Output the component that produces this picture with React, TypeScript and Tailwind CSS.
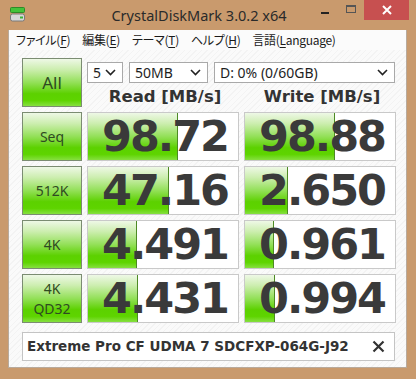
import React from "react";

type Result = {
  label: string[];
  read: string;
  write: string;
  readBar: number;
  writeBar: number;
};

const results: Result[] = [
  { label: ["Seq"], read: "98.72", write: "98.88", readBar: 90, writeBar: 90 },
  { label: ["512K"], read: "47.16", write: "2.650", readBar: 81, writeBar: 43 },
  { label: ["4K"], read: "4.491", write: "0.961", readBar: 49, writeBar: 29 },
  { label: ["4K", "QD32"], read: "4.431", write: "0.994", readBar: 50, writeBar: 30 },
];

const greenFill =
  "bg-[linear-gradient(to_bottom,#eef8e6_0%,#cdeeb0_22%,#93e058_50%,#5cd100_74%,#5ed400_88%,#86e040_100%)]";

const Chevron = () => (
  <svg width="11" height="7" viewBox="0 0 11 7" className="shrink-0">
    <path d="M1 1 L5.5 5.5 L10 1" fill="none" stroke="#222" strokeWidth="1.6" />
  </svg>
);

const Select = ({ text, width }: { text: string; width: string }) => (
  <div
    className={`${width} h-[21px] flex items-center justify-between bg-white border border-[#a9a9a9] pl-[5px] pr-[6px] text-[14px] text-[#1e1e1e] leading-none`}
  >
    <span>{text}</span>
    <Chevron />
  </div>
);

const GreenButton = ({ lines, big }: { lines: string[]; big?: boolean }) => (
  <div
    className={`w-[60px] h-full shrink-0 flex flex-col items-center justify-center border border-[#7b8c72] ${greenFill} ${
      big ? "text-[17px]" : "text-[14px] leading-[20px]"
    } text-[#2f4a22]`}
  >
    {lines.map((l) => (
      <span key={l}>{l}</span>
    ))}
  </div>
);

const ValueCell = ({ value, bar }: { value: string; bar: number }) => (
  <div className="w-[152px] h-full shrink-0 grid border border-[#c9c9c9] bg-white overflow-hidden">
    <div
      className={`col-start-1 row-start-1 h-full border-r border-[#4d8a24] ${greenFill}`}
      style={{ width: bar }}
    />
    <div className="col-start-1 row-start-1 flex items-center justify-center pl-[4px] font-['DejaVu_Sans',sans-serif] font-bold text-[43px] tracking-[-2px] text-[#3a3a3a] leading-none">
      {value}
    </div>
  </div>
);

const Underlined = ({ pre, key1, post }: { pre: string; key1: string; post: string }) => (
  <span>
    {pre}
    <span className="underline underline-offset-2">{key1}</span>
    {post}
  </span>
);

export default function App() {
  return (
    <div className="w-[416px] h-[379px] bg-[#c99a6d] flex flex-col font-['Noto_Sans','Noto_Sans_CJK_JP',sans-serif]">
      {/* title bar */}
      <div className="h-[30px] flex items-start shrink-0">
        <div className="w-[30px] pl-[10px] pt-[7px]">
          <svg width="16" height="16" viewBox="0 0 16 16">
            <rect x="0.5" y="0.5" width="14" height="5" rx="1" fill="#44c23a" stroke="#2e8a28" />
            <rect x="0.5" y="7" width="14" height="7" rx="2" fill="#d8d8d8" stroke="#7a7a7a" />
            <rect x="10" y="9.5" width="3" height="2" fill="#3bb33a" />
          </svg>
        </div>
        <div className="flex-1 text-center text-[14.5px] text-[#2a2a2a] pt-[5px] pl-[56px] whitespace-nowrap">
          CrystalDiskMark 3.0.2 x64
        </div>
        <div className="flex items-start">
          <div className="w-[26px] h-[20px] flex items-center justify-center">
            <div className="w-[8px] h-[2px] bg-[#222] mt-[6px]" />
          </div>
          <div className="w-[26px] h-[20px] flex items-center justify-center">
            <div className="w-[10px] h-[8px] border border-[#555] border-t-2 mt-[-2px]" />
          </div>
          <div className="w-[45px] h-[20px] bg-[#c75050] flex items-center justify-center mr-[7px]">
            <svg width="10" height="10" viewBox="0 0 10 10">
              <path d="M1 1 L9 9 M9 1 L1 9" stroke="#fff" strokeWidth="2" />
            </svg>
          </div>
        </div>
      </div>

      {/* client area */}
      <div className="flex-1 mx-[8px] mr-[9px] mb-[11px] flex flex-col border border-[#b8aa9c] border-t-0">
        <div className="h-[20px] bg-[#fbfbfb] flex items-center pl-[7px] gap-[12px] text-[12px] tracking-[-0.3px] text-[#1a1a1a] font-['Noto_Sans_CJK_JP',sans-serif] [font-feature-settings:'palt'] leading-none whitespace-nowrap">
          <Underlined pre="ファイル(" key1="F" post=")" />
          <Underlined pre="編集(" key1="E" post=")" />
          <Underlined pre="テーマ(" key1="T" post=")" />
          <Underlined pre="ヘルプ(" key1="H" post=")" />
          <Underlined pre="言語(" key1="L" post="anguage)" />
        </div>

        <div className="flex-1 bg-[repeating-linear-gradient(135deg,#f3f3f3_0px,#f3f3f3_1px,#fafafa_1px,#fafafa_4px)] pl-[13px] pt-[8px] flex flex-col gap-[5px]">
          <div className="flex gap-[5px] h-[49px]">
            <GreenButton lines={["All"]} big />
            <div className="flex flex-col">
              <div className="flex gap-[6px] pt-[4px]">
                <Select text="5" width="w-[36px]" />
                <Select text="50MB" width="w-[79px]" />
                <Select text="D: 0% (0/60GB)" width="w-[181px]" />
              </div>
              <div className="flex mt-[4px] font-['DejaVu_Sans',sans-serif] font-bold text-[16.5px] text-[#333] leading-[20px]">
                <div className="w-[152px] text-center pl-[4px]">Read [MB/s]</div>
                <div className="w-[5px]" />
                <div className="w-[152px] text-center pl-[4px]">Write [MB/s]</div>
              </div>
            </div>
          </div>

          {results.map((r) => (
            <div key={r.read} className="flex gap-[5px] h-[49px]">
              <GreenButton lines={r.label} />
              <ValueCell value={r.read} bar={r.readBar} />
              <ValueCell value={r.write} bar={r.writeBar} />
            </div>
          ))}

          <div className="mt-[4px] w-[373px] h-[29px] bg-white border border-[#c4c4c4] flex items-center justify-between pl-[4px] pr-[9px]">
            <span className="font-['DejaVu_Sans',sans-serif] font-bold text-[13.5px] text-[#333] whitespace-nowrap">
              Extreme Pro CF UDMA 7 SDCFXP-064G-J92
            </span>
            <svg width="13" height="13" viewBox="0 0 13 13">
              <path d="M1.5 1.5 L11.5 11.5 M11.5 1.5 L1.5 11.5" stroke="#333" strokeWidth="2.2" />
            </svg>
          </div>
        </div>
      </div>
    </div>
  );
}
